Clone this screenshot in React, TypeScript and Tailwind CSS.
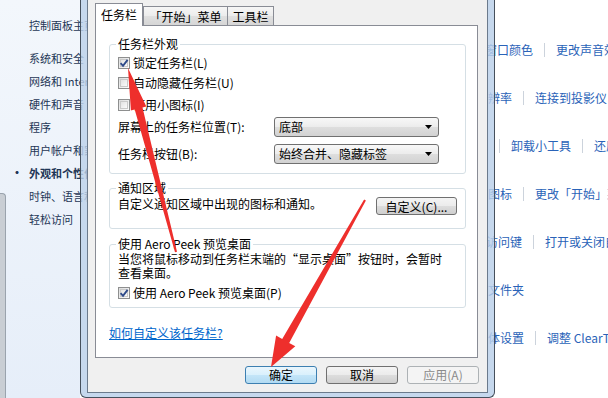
import React from "react";

const F = "font-['Noto_Sans_CJK_SC','Noto_Sans',sans-serif]";

function Checkbox({ checked }: { checked?: boolean }) {
  return (
    <span className="relative flex h-[12px] w-[12px] shrink-0 items-center justify-center border border-[#8e8f8f] bg-[linear-gradient(135deg,#dcdcdc,#fdfdfd)]">
      <span className="h-[8px] w-[8px] border border-[#c9c9c9] bg-[linear-gradient(135deg,#e2e2e2,#fafafa)]" />
      {checked && (
        <svg className="absolute left-0 top-0" width="10" height="10" viewBox="0 0 10 10">
          <path d="M1.6 5.2 L4 7.8 L8.6 1.8" fill="none" stroke="#2f4b8a" strokeWidth="1.9" />
        </svg>
      )}
    </span>
  );
}

function Select({ value }: { value: string }) {
  return (
    <div className="flex h-[20px] w-[165px] items-center justify-between rounded-[3px] border border-[#707070] bg-[linear-gradient(#f8f8f8,#ececec_50%,#dedede_51%,#d2d2d2)] pl-[4px] pr-[6px]">
      <span className="leading-[16px]">{value}</span>
      <svg width="7" height="4" viewBox="0 0 7 4">
        <path d="M0 0 H7 L3.5 4 Z" fill="#000" />
      </svg>
    </div>
  );
}

function Btn({
  children,
  kind,
  w = "w-[72px]",
}: {
  children: React.ReactNode;
  kind: "default" | "normal" | "disabled";
  w?: string;
}) {
  const cls =
    kind === "default"
      ? "border-[#3c7fb1] bg-[linear-gradient(#eaf6fd,#d9f0fc_50%,#c4e5f8_51%,#b2dbf3)] text-black"
      : kind === "normal"
      ? "border-[#707070] bg-[linear-gradient(#f4f4f4,#ebebeb_50%,#dddddd_51%,#cfcfcf)] text-black"
      : "border-[#adb2b5] bg-[#f4f4f4] text-[#8a8a8a]";
  return (
    <div
      className={`flex h-[18px] ${w} items-center justify-center rounded-[3px] border ${cls} text-[12px] leading-[16px]`}
    >
      {children}
    </div>
  );
}

function Sep() {
  return <span className="mx-[11px] h-[14px] w-px shrink-0 bg-[#ccd3dc]" />;
}

export default function App() {
  return (
    <div className={`relative flex h-[398px] w-[608px] overflow-hidden bg-white ${F}`}>
      {/* Sidebar */}
      <div className="flex h-full w-[80px] shrink-0 bg-[linear-gradient(#f3f7fc,#e6eef9)]">
        <div className="flex w-[6px] shrink-0 flex-col justify-end">
          <div className="h-[205px] rounded-tr-[4px] border-r border-t border-[#9aa3ad] bg-[#c9ced4]" />
        </div>
        <div className="flex flex-col whitespace-nowrap pl-[23px] pt-[17px] text-[11px] leading-[16px] text-[#1e3656]">
          <div className="h-[16px]">控制面板主页</div>
          <div className="mt-[17px] flex flex-col gap-[7px]">
            <div className="h-[16px]">系统和安全</div>
            <div className="h-[16px]">网络和 Internet</div>
            <div className="h-[16px]">硬件和声音</div>
            <div className="h-[16px]">程序</div>
            <div className="h-[16px]">用户帐户和家庭安全</div>
            <div className="-ml-[18px] flex h-[16px] font-bold">
              <span className="w-[18px] text-[12px]">•</span>
              <span>外观和个性化</span>
            </div>
            <div className="h-[16px]">时钟、语言和区域</div>
            <div className="h-[16px]">轻松访问</div>
          </div>
        </div>
      </div>

      {/* Main content links */}
      <div className="flex min-w-0 flex-1 flex-col gap-[32px] overflow-hidden whitespace-nowrap pt-[42px] text-[12px] leading-[16px] text-[#2a63b8]">
        <div className="ml-[405px] flex h-[16px] items-center">
          <span>窗口颜色</span>
          <Sep />
          <span>更改声音效果</span>
        </div>
        <div className="ml-[396px] flex h-[16px] items-center">
          <span>分辨率</span>
          <Sep />
          <span>连接到投影仪</span>
        </div>
        <div className="ml-[348px] flex h-[16px] items-center">
          <span>添加小工具</span>
          <Sep />
          <span>卸载小工具</span>
          <Sep />
          <span>还原桌面小工具</span>
        </div>
        <div className="ml-[408px] flex h-[16px] items-center">
          <span>图标</span>
          <Sep />
          <span>更改「开始」菜单上的图片</span>
        </div>
        <div className="ml-[406px] flex h-[16px] items-center">
          <span>访问键</span>
          <Sep />
          <span>打开或关闭自动排列窗口</span>
        </div>
        <div className="ml-[408px] flex h-[16px] items-center">
          <span>文件夹</span>
        </div>
        <div className="ml-[408px] flex h-[16px] items-center">
          <span>体设置</span>
          <Sep />
          <span>调整 ClearType 文本</span>
        </div>
      </div>

      {/* Dialog window */}
      <div className="absolute left-[80px] top-0 z-10 h-[398px] w-[415px] rounded-b-[6px] border-x border-b border-[#46505c] bg-[rgba(186,208,233,0.82)] px-[6px] pb-[4px]">
        <div className="flex h-[393px] w-[401px] flex-col border-x border-b border-[#6b7a8c] bg-[#f0f0f0] text-[12px] leading-[16px] text-black">
          <div className="pl-[7px] pr-[9px] pt-[3px]">
            {/* Tabs */}
            <div className="flex h-[22px] items-end">
              <div className="relative z-10 -mb-px flex h-[23px] w-[48px] justify-center border border-b-0 border-[#898c95] bg-white pt-[3px]">
                任务栏
              </div>
              <div className="flex h-[19px] w-[85px] justify-center border border-b-0 border-[#898c95] bg-[linear-gradient(#f6f6f6,#ececec_50%,#e0e0e0_51%,#d6d6d6)] pt-[2px]">
                「开始」菜单
              </div>
              <div className="-ml-px flex h-[19px] w-[47px] justify-center border border-b-0 border-[#898c95] bg-[linear-gradient(#f6f6f6,#ececec_50%,#e0e0e0_51%,#d6d6d6)] pt-[2px]">
                工具栏
              </div>
            </div>
            {/* Panel */}
            <div className="flex h-[333px] w-[383px] flex-col border border-[#898c95] bg-white">
              <fieldset className="ml-[13px] mr-[11px] mt-[10px] rounded-[3px] border border-[#d5dfe5] pb-[8px] pl-[8px]">
                <legend className="-ml-[2px] px-[2px] leading-[16px]">任务栏外观</legend>
                <div className="mt-[1px] flex h-[20px] items-center gap-[3px]">
                  <Checkbox checked />
                  <span>锁定任务栏(L)</span>
                </div>
                <div className="flex h-[20px] items-center gap-[3px]">
                  <Checkbox />
                  <span>自动隐藏任务栏(U)</span>
                </div>
                <div className="mt-[1px] flex h-[22px] items-center gap-[3px]">
                  <Checkbox />
                  <span>使用小图标(I)</span>
                </div>
                <div className="flex h-[22px] items-center">
                  <span className="w-[156px]">屏幕上的任务栏位置(T):</span>
                  <Select value="底部" />
                </div>
                <div className="mt-[5px] flex h-[22px] items-center">
                  <span className="w-[156px]">任务栏按钮(B):</span>
                  <Select value="始终合并、隐藏标签" />
                </div>
              </fieldset>

              <fieldset className="ml-[13px] mr-[11px] mt-[6px] rounded-[3px] border border-[#d5dfe5] pb-[12px] pl-[8px] pr-[8px]">
                <legend className="-ml-[2px] px-[2px] leading-[16px]">通知区域</legend>
                <div className="flex h-[20px] items-start justify-between">
                  <span>自定义通知区域中出现的图标和通知。</span>
                  <div className="mt-[1px]">
                    <Btn kind="normal" w="w-[81px]">
                      <span className="h-[17px] leading-[17px]">自定义(C)...</span>
                    </Btn>
                  </div>
                </div>
              </fieldset>

              <fieldset className="ml-[13px] mr-[11px] mt-[7px] rounded-[3px] border border-[#d5dfe5] pb-[4px] pl-[8px]">
                <legend className="-ml-[2px] px-[2px] leading-[16px]">使用 Aero Peek 预览桌面</legend>
                <div className="whitespace-nowrap leading-[14px]">
                  <div>当您将鼠标移动到任务栏末端的“显示桌面”按钮时，会暂时</div>
                  <div>查看桌面。</div>
                </div>
                <div className="mt-[3px] flex h-[20px] items-center gap-[3px]">
                  <Checkbox checked />
                  <span>使用 Aero Peek 预览桌面(P)</span>
                </div>
              </fieldset>

              <div className="ml-[13px] mt-[17px] leading-[16px]">
                <span className="text-[#0066cc] underline">如何自定义该任务栏?</span>
              </div>
            </div>
          </div>
          {/* Buttons */}
          <div className="mt-[8px] flex justify-end gap-[9px] pr-[8px]">
            <Btn kind="default">确定</Btn>
            <Btn kind="normal">取消</Btn>
            <Btn kind="disabled">应用(A)</Btn>
          </div>
        </div>
      </div>

      {/* Red annotation arrows */}
      <svg
        className="pointer-events-none absolute left-0 top-0 z-20"
        width="608"
        height="398"
        viewBox="0 0 608 398"
      >
        <polygon
          points="128,68 146.3,106.6 142.5,107.6 177,251.7 175,252.3 134.7,109.6 130.9,110.6"
          fill="#ee2f2c"
        />
        <polygon
          points="271,367 295.3,346.3 289.2,342.9 365.9,200.5 364.1,199.5 282.2,338.9 276.1,335.5"
          fill="#ee2f2c"
        />
      </svg>
    </div>
  );
}
